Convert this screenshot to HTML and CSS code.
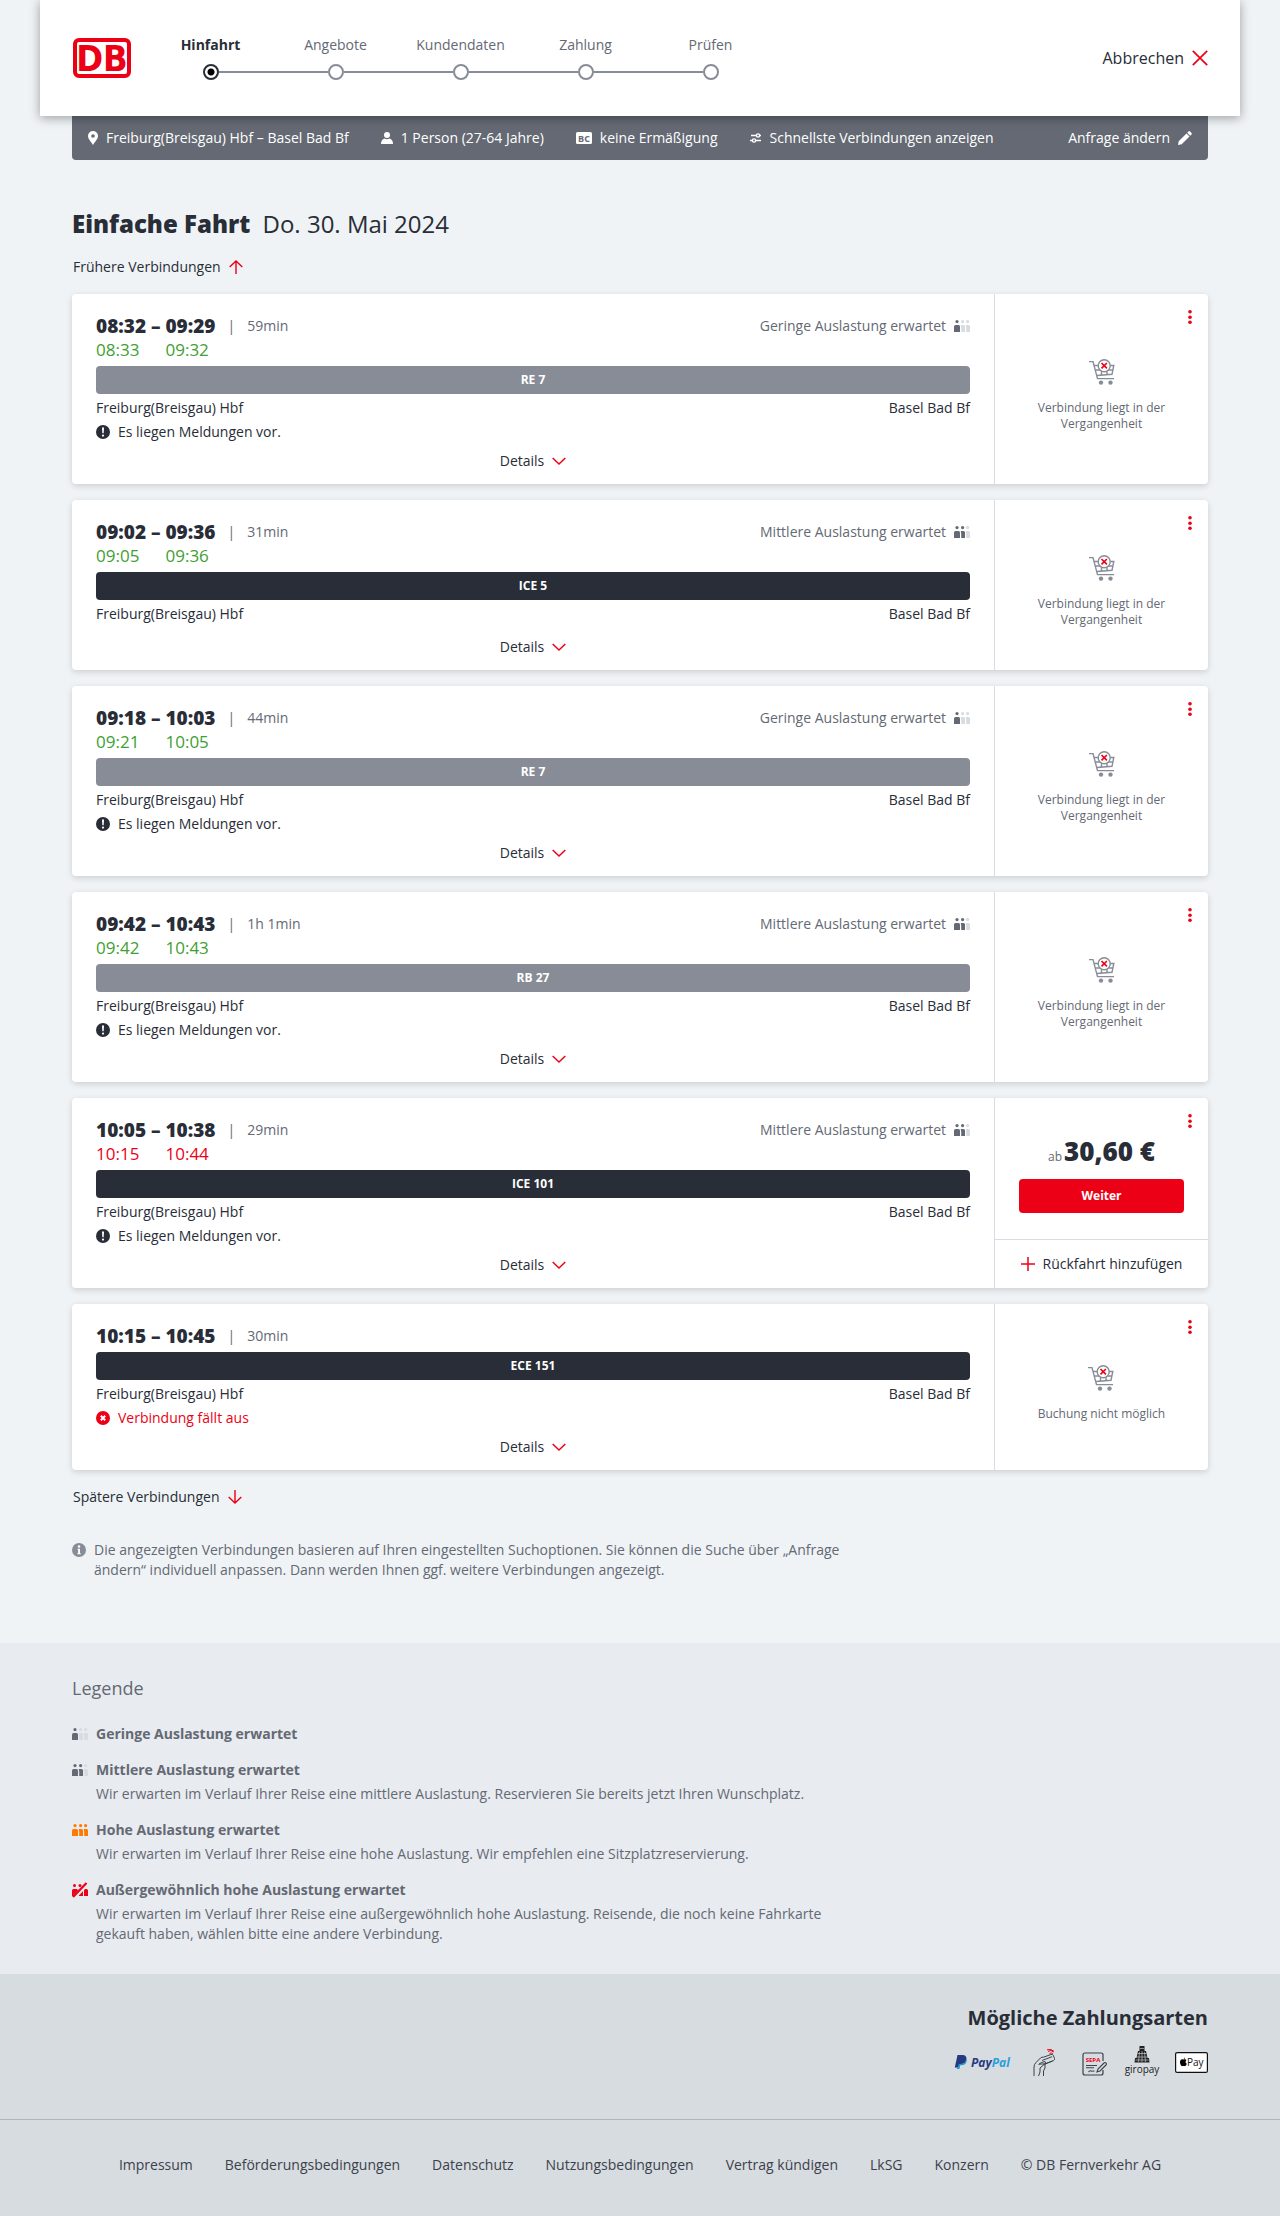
FILE: index.html
```html
<!DOCTYPE html>
<html lang="de">
<head>
    <meta charset="UTF-8">
    <meta name="viewport" content="width=device-width, initial-scale=1.0">
    <title>Einfache Fahrt – Angebote</title>
    <link rel="stylesheet" href="styles.css">
</head>
<body>
    <!-- Icons -->
    <svg class="icon-sprite" aria-hidden="true">
        <symbol id="i-leute" viewBox="0 0 16 12">
            <g class="p1"><circle cx="3" cy="1.600" r="1.600"/><path d="M0 12V6.500Q0 5 1.500 5h3Q6 5 6 6.500V12z"/></g>
            <g class="p2"><circle cx="8.600" cy="1.600" r="1.600"/><path d="M6.800 5h2.700Q11 5 11 6.500V12H7.200V8q0-1.500-.4-2z"/></g>
            <g class="p3"><circle cx="13.600" cy="1.600" r="1.600"/><path d="M11.800 5h2.700Q16 5 16 6.500V12h-3.800V8q0-1.500-.4-2z"/></g>
        </symbol>
        <symbol id="i-wagen" viewBox="0 0 26 26">
            <g fill="none" stroke="#878c96" stroke-width="1.400">
                <path d="M0 2.600h4l4.500 17H25M5.500 6.500h19.300L23 15.300 8 16.500M6.500 11H24M12.500 11v5.300M18 11v5"/>
                <circle cx="15.200" cy="6.700" r="6" fill="#fff"/>
            </g>
            <circle cx="12" cy="23.600" r="2.200" fill="#878c96"/>
            <circle cx="21.500" cy="23.600" r="2.200" fill="#878c96"/>
            <path d="M12.500 4l5.400 5.400M17.900 4l-5.400 5.400" stroke="#ec0016" stroke-width="1.600"/>
        </symbol>
        <symbol id="i-punkte" viewBox="0 0 4 14">
            <g fill="#ec0016"><circle cx="2" cy="1.800" r="1.800"/><circle cx="2" cy="7.200" r="1.800"/><circle cx="2" cy="12.200" r="1.800"/></g>
        </symbol>
        <symbol id="i-winkel" viewBox="0 0 14 14">
            <path d="M.7 4L7 10l6.300-6" fill="none" stroke="#ec0016" stroke-width="1.500"/>
        </symbol>
        <symbol id="i-hinweis" viewBox="0 0 14 14">
            <circle cx="7" cy="7" r="7" fill="#282d37"/>
            <path d="M6 2.500h2L7.700 8.300H6.300z" fill="#fff"/><circle cx="7" cy="10.600" r="1.100" fill="#fff"/>
        </symbol>
    </svg>

    <header class="kopf">
        <a class="logo" href="#" aria-label="Deutsche Bahn">
            <svg width="58" height="40" viewBox="0 0 58 40">
                <rect x="2" y="2" width="54" height="36" rx="4" fill="#fff" stroke="#ec0016" stroke-width="4"/>
                <text x="29" y="33" text-anchor="middle">DB</text>
            </svg>
        </a>
        <ol class="schritte">
            <li class="schritt aktiv">Hinfahrt<span class="marke"><i></i></span></li>
            <li class="schritt">Angebote<span class="marke"><i></i></span></li>
            <li class="schritt">Kundendaten<span class="marke"><i></i></span></li>
            <li class="schritt">Zahlung<span class="marke"><i></i></span></li>
            <li class="schritt">Prüfen<span class="marke"><i></i></span></li>
        </ol>
        <button class="abbrechen">Abbrechen
            <svg width="16" height="16" viewBox="0 0 16 16"><path d="M.8.800l14.400 14.400M15.200.800L.8 15.200" stroke="#ec0016" stroke-width="1.700"/></svg>
        </button>
    </header>

    <div class="anfrage">
        <span class="angabe">
            <svg width="10" height="14" viewBox="0 0 10 14"><path d="M5 0a5 5 0 0 1 5 5c0 3-3 5.500-5 9-2-3.500-5-6-5-9a5 5 0 0 1 5-5z" fill="#fff"/><circle cx="5" cy="5" r="1.800" fill="#646973"/></svg>
            Freiburg(Breisgau) Hbf – Basel Bad Bf
        </span>
        <span class="angabe">
            <svg width="12" height="12" viewBox="0 0 12 12"><circle cx="6" cy="3" r="3" fill="#fff"/><path d="M0 12q0-4.500 3.500-5.500Q6 8 8.500 6.500 12 7.500 12 12z" fill="#fff"/></svg>
            1 Person (27-64 Jahre)
        </span>
        <span class="angabe">
            <svg width="16" height="12" viewBox="0 0 16 12"><rect width="16" height="12" rx="1.500" fill="#fff"/><text x="8" y="9.500" text-anchor="middle" font-weight="700" font-size="9" fill="#646973">BC</text></svg>
            keine Ermäßigung
        </span>
        <span class="angabe">
            <svg width="12" height="10" viewBox="0 0 12 10"><g fill="none" stroke="#fff" stroke-width="1.400"><path d="M1 2.500h5M9.500 2.500H11M0 7.500h2M6 7.500h5"/><circle cx="8" cy="2.500" r="1.600"/><circle cx="4" cy="7.500" r="1.600"/></g></svg>
            Schnellste Verbindungen anzeigen
        </span>
        <button class="angabe aendern">Anfrage ändern
            <svg width="14" height="14" viewBox="0 0 14 14"><path d="M0 14l.7-3.700 7.800-7.800 3 3-7.800 7.800zM9.200 1.800l1.300-1.300q.8-.8 1.600 0l1.400 1.400q.8.800 0 1.600l-1.300 1.300z" fill="#fff"/></svg>
        </button>
    </div>

    <main class="inhalt">
        <h1 class="titel"><strong>Einfache Fahrt</strong> Do. 30. Mai 2024</h1>
        <button class="blaettern">Frühere Verbindungen
            <svg width="14" height="14" viewBox="0 0 14 14"><path d="M7 14V1M.7 7L7 .9 13.300 7" fill="none" stroke="#ec0016" stroke-width="1.400"/></svg>
        </button>

        <div class="liste">
            <article class="karte">
                <div class="reise">
                    <div class="kopfzeile">
                        <div class="zeiten"><b>08:32 –</b><b>09:29</b><span class="echt">08:33</span><span class="echt">09:32</span></div>
                        <span class="dauer">59min</span>
                        <span class="auslastung">Geringe Auslastung erwartet <svg class="leute gering"><use href="#i-leute"/></svg></span>
                    </div>
                    <div class="zug nah">RE 7</div>
                    <div class="info">
                        <div class="orte"><span>Freiburg(Breisgau) Hbf</span><span>Basel Bad Bf</span></div>
                        <p class="meldung"><svg><use href="#i-hinweis"/></svg>Es liegen Meldungen vor.</p>
                    </div>
                    <button class="details">Details <svg><use href="#i-winkel"/></svg></button>
                </div>
                <div class="seite">
                    <button class="menue" aria-label="Optionen"><svg><use href="#i-punkte"/></svg></button>
                    <div class="gesperrt"><svg><use href="#i-wagen"/></svg>Verbindung liegt in der Vergangenheit</div>
                </div>
            </article>

            <article class="karte">
                <div class="reise">
                    <div class="kopfzeile">
                        <div class="zeiten"><b>09:02 –</b><b>09:36</b><span class="echt">09:05</span><span class="echt">09:36</span></div>
                        <span class="dauer">31min</span>
                        <span class="auslastung">Mittlere Auslastung erwartet <svg class="leute mittel"><use href="#i-leute"/></svg></span>
                    </div>
                    <div class="zug">ICE 5</div>
                    <div class="info">
                        <div class="orte"><span>Freiburg(Breisgau) Hbf</span><span>Basel Bad Bf</span></div>
                    </div>
                    <button class="details">Details <svg><use href="#i-winkel"/></svg></button>
                </div>
                <div class="seite">
                    <button class="menue" aria-label="Optionen"><svg><use href="#i-punkte"/></svg></button>
                    <div class="gesperrt"><svg><use href="#i-wagen"/></svg>Verbindung liegt in der Vergangenheit</div>
                </div>
            </article>

            <article class="karte">
                <div class="reise">
                    <div class="kopfzeile">
                        <div class="zeiten"><b>09:18 –</b><b>10:03</b><span class="echt">09:21</span><span class="echt">10:05</span></div>
                        <span class="dauer">44min</span>
                        <span class="auslastung">Geringe Auslastung erwartet <svg class="leute gering"><use href="#i-leute"/></svg></span>
                    </div>
                    <div class="zug nah">RE 7</div>
                    <div class="info">
                        <div class="orte"><span>Freiburg(Breisgau) Hbf</span><span>Basel Bad Bf</span></div>
                        <p class="meldung"><svg><use href="#i-hinweis"/></svg>Es liegen Meldungen vor.</p>
                    </div>
                    <button class="details">Details <svg><use href="#i-winkel"/></svg></button>
                </div>
                <div class="seite">
                    <button class="menue" aria-label="Optionen"><svg><use href="#i-punkte"/></svg></button>
                    <div class="gesperrt"><svg><use href="#i-wagen"/></svg>Verbindung liegt in der Vergangenheit</div>
                </div>
            </article>

            <article class="karte">
                <div class="reise">
                    <div class="kopfzeile">
                        <div class="zeiten"><b>09:42 –</b><b>10:43</b><span class="echt">09:42</span><span class="echt">10:43</span></div>
                        <span class="dauer">1h 1min</span>
                        <span class="auslastung">Mittlere Auslastung erwartet <svg class="leute mittel"><use href="#i-leute"/></svg></span>
                    </div>
                    <div class="zug nah">RB 27</div>
                    <div class="info">
                        <div class="orte"><span>Freiburg(Breisgau) Hbf</span><span>Basel Bad Bf</span></div>
                        <p class="meldung"><svg><use href="#i-hinweis"/></svg>Es liegen Meldungen vor.</p>
                    </div>
                    <button class="details">Details <svg><use href="#i-winkel"/></svg></button>
                </div>
                <div class="seite">
                    <button class="menue" aria-label="Optionen"><svg><use href="#i-punkte"/></svg></button>
                    <div class="gesperrt"><svg><use href="#i-wagen"/></svg>Verbindung liegt in der Vergangenheit</div>
                </div>
            </article>

            <article class="karte">
                <div class="reise">
                    <div class="kopfzeile">
                        <div class="zeiten"><b>10:05 –</b><b>10:38</b><span class="echt spaet">10:15</span><span class="echt spaet">10:44</span></div>
                        <span class="dauer">29min</span>
                        <span class="auslastung">Mittlere Auslastung erwartet <svg class="leute mittel"><use href="#i-leute"/></svg></span>
                    </div>
                    <div class="zug">ICE 101</div>
                    <div class="info">
                        <div class="orte"><span>Freiburg(Breisgau) Hbf</span><span>Basel Bad Bf</span></div>
                        <p class="meldung"><svg><use href="#i-hinweis"/></svg>Es liegen Meldungen vor.</p>
                    </div>
                    <button class="details">Details <svg><use href="#i-winkel"/></svg></button>
                </div>
                <div class="seite">
                    <button class="menue" aria-label="Optionen"><svg><use href="#i-punkte"/></svg></button>
                    <div class="angebot">
                        <div class="preis"><small>ab</small><strong>30,60 €</strong></div>
                        <button class="weiter">Weiter</button>
                    </div>
                    <button class="rueckfahrt">
                        <svg width="14" height="14" viewBox="0 0 14 14"><path d="M7 0v14M0 7h14" stroke="#ec0016" stroke-width="1.500"/></svg>
                        Rückfahrt hinzufügen
                    </button>
                </div>
            </article>

            <article class="karte">
                <div class="reise">
                    <div class="kopfzeile">
                        <div class="zeiten"><b>10:15 –</b><b>10:45</b></div>
                        <span class="dauer">30min</span>
                    </div>
                    <div class="zug">ECE 151</div>
                    <div class="info">
                        <div class="orte"><span>Freiburg(Breisgau) Hbf</span><span>Basel Bad Bf</span></div>
                        <p class="meldung ausfall">
                            <svg viewBox="0 0 14 14"><circle cx="7" cy="7" r="7" fill="#ec0016"/><path d="M4.800 4.800l4.400 4.400M9.200 4.800L4.800 9.200" stroke="#fff" stroke-width="2"/></svg>
                            Verbindung fällt aus
                        </p>
                    </div>
                    <button class="details">Details <svg><use href="#i-winkel"/></svg></button>
                </div>
                <div class="seite">
                    <button class="menue" aria-label="Optionen"><svg><use href="#i-punkte"/></svg></button>
                    <div class="gesperrt"><svg><use href="#i-wagen"/></svg>Buchung nicht möglich</div>
                </div>
            </article>
        </div>

        <button class="blaettern">Spätere Verbindungen
            <svg width="14" height="14" viewBox="0 0 14 14"><path d="M7 0v13M.7 7L7 13.100 13.300 7" fill="none" stroke="#ec0016" stroke-width="1.400"/></svg>
        </button>

        <div class="suchhinweis">
            <svg width="14" height="14" viewBox="0 0 14 14"><circle cx="7" cy="7" r="7" fill="#878c96"/><circle cx="7" cy="3.500" r="1.200" fill="#fff"/><path d="M5.500 5.800H8v4.400h.8v1H5.300v-1h.8V6.800h-.6z" fill="#fff"/></svg>
            <p>Die angezeigten Verbindungen basieren auf Ihren eingestellten Suchoptionen. Sie können die Suche über „Anfrage ändern“ individuell anpassen. Dann werden Ihnen ggf. weitere Verbindungen angezeigt.</p>
        </div>
    </main>

    <section class="legende">
        <h2>Legende</h2>
        <dl>
            <div>
                <dt><svg class="leute gering"><use href="#i-leute"/></svg>Geringe Auslastung erwartet</dt>
            </div>
            <div>
                <dt><svg class="leute mittel"><use href="#i-leute"/></svg>Mittlere Auslastung erwartet</dt>
                <dd>Wir erwarten im Verlauf Ihrer Reise eine mittlere Auslastung. Reservieren Sie bereits jetzt Ihren Wunschplatz.</dd>
            </div>
            <div>
                <dt><svg class="leute hoch"><use href="#i-leute"/></svg>Hohe Auslastung erwartet</dt>
                <dd>Wir erwarten im Verlauf Ihrer Reise eine hohe Auslastung. Wir empfehlen eine Sitzplatzreservierung.</dd>
            </div>
            <div>
                <dt>
                    <svg class="leute" viewBox="0 0 16 12"><g fill="#ec0016"><circle cx="2.500" cy="1.600" r="1.500"/><circle cx="8" cy="1.600" r="1.500"/><path d="M0 12V6.500Q0 5 1.500 5h3Q6 5 6 6.500V12zM6.800 5h2.700Q11 5 11 6.500V12H6.800zM12 5h2.500Q16 5 16 6.500V12h-4z"/></g><path d="M3 12.500L15 0" stroke="#e8ebf0" stroke-width="4"/><path d="M1 13L14.500-1" stroke="#ec0016" stroke-width="2.200"/></svg>
                    Außergewöhnlich hohe Auslastung erwartet
                </dt>
                <dd>Wir erwarten im Verlauf Ihrer Reise eine außergewöhnlich hohe Auslastung. Reisende, die noch keine Fahrkarte gekauft haben, wählen bitte eine andere Verbindung.</dd>
            </div>
        </dl>
    </section>

    <footer class="fuss">
        <div class="zahlung">
            <h2>Mögliche Zahlungsarten</h2>
            <div class="zahlarten">
                <svg width="57" height="34" viewBox="0 0 57 34">
                    <path d="M3.500 10h5q4.500 0 3.800 4.500-.8 4.500-5.500 4.500H5l-.6 3.500H.8z" fill="#253b80"/>
                    <path d="M12.300 12.500q.9 1.200.4 3.500-.9 4.300-5.500 4.300h-1L5.500 24H2.800l.2-1.500h1.400L5 19h1.800q4.700 0 5.500-4.500z" fill="#179bd7"/>
                    <text x="17" y="22" font-weight="700" font-style="italic" font-size="12" fill="#253b80">Pay<tspan fill="#2a9fdc">Pal</tspan></text>
                </svg>
                <svg width="30" height="34" viewBox="0 0 30 34">
                    <g fill="none" stroke="#3c414b" stroke-width="1">
                        <path d="M7 31v-9q0-2.500 2-4.500l4.500-4.500q1.500-1.300 3-.8l7.500-2.700q1.800-.5 2.300.8l1.200 3.200q.4 1.500-1 2.100l-8.500 3.300-6 .2"/>
                        <path d="M13 23l4-3.500q3-1.300 1-3l-3.500 1-3 2M17 19.500l8.500-3.500M15 15.500l10-3.800M18 19v4l-1.500 3v5M13 23v4l-1.500 4"/>
                    </g>
                    <path d="M21 6.500q3-2.500 5.500.5M22.500 8.500q1.800-1.500 3.500.5M20 4.800q4-1.500 7 1.500" fill="none" stroke="#ec0016" stroke-width="1"/>
                </svg>
                <svg width="36" height="34" viewBox="0 0 36 34">
                    <path d="M30 16V10q0-2-2-2H12q-2 0-2 2v18q0 2 2 2h16q2 0 2-2v-3" fill="none" stroke="#3c414b" stroke-width="1.200"/>
                    <text x="20" y="17" text-anchor="middle" font-weight="700" font-size="6" fill="#ec0016">SEPA</text>
                    <path d="M13 20.500h11M13 22.700h8M15.500 27q2-2 3-.8l3-.2M24 27l1-3 6-6q1-1 2 0t0 2l-6 6z" fill="none" stroke="#3c414b" stroke-width="1.100"/>
                </svg>
                <svg width="34" height="34" viewBox="0 0 34 34">
                    <path d="M14.500 1h5v5h1.500l1.500 7H24l.5 4.500h-15L10 13h1.500L13 6h1.500z" fill="#222"/>
                    <path d="M12.500 8.500h9M11.500 12h11M10.500 15h13M17 6v11M14.500 7l-1 10M19.500 7l1 10M15 3.500h4" stroke="#d7dce0" stroke-width=".6"/>
                    <text x="17" y="28" text-anchor="middle" font-size="10" fill="#222">giropay</text>
                </svg>
                <svg width="33" height="34" viewBox="0 0 33 34">
                    <rect x=".6" y="7.600" width="31.800" height="19.800" rx="1.500" fill="#fff" stroke="#111" stroke-width="1.200"/>
                    <path d="M8.800 14q.1-1.300 1.300-1.600.1 1.300-1.300 1.600zM5 17.300c0-3 2-3.500 3.500-2.700 1.200-.7 2.500-.3 3 .5-1.400 1-1.200 3 .3 3.600-.6 1.800-1.600 2.900-2.600 2.400q-.8-.4-1.600 0C6.200 21.600 5 19.300 5 17.300z"/>
                    <text x="12" y="21" font-size="10" fill="#111">Pay</text>
                </svg>
            </div>
        </div>
        <nav class="links">
            <a href="#">Impressum</a>
            <a href="#">Beförderungsbedingungen</a>
            <a href="#">Datenschutz</a>
            <a href="#">Nutzungsbedingungen</a>
            <a href="#">Vertrag kündigen</a>
            <a href="#">LkSG</a>
            <a href="#">Konzern</a>
            <span>© DB Fernverkehr AG</span>
        </nav>
    </footer>
</body>
</html>
```
FILE: styles.css
```css
* {
    box-sizing: border-box;
}

body {
    margin: 0;
    background-color: #eff3f6;
    color: #282d37;
    font-family: "Open Sans", "Noto Sans", sans-serif;
    font-size: 14px;
    line-height: 20px;
}

h1, h2, p, ol, dl, dd {
    margin: 0;
    padding: 0;
}

button {
    border: none;
    padding: 0;
    background: none;
    color: inherit;
    font: inherit;
    cursor: pointer;
}

svg {
    flex-shrink: 0;
    overflow: visible;
}

.icon-sprite {
    display: none;
}

/* Kopfbereich */
.kopf {
    position: relative;
    z-index: 1;
    display: flex;
    align-items: center;
    height: 116px;
    margin: 0 40px;
    padding: 0 32px;
    background-color: #fff;
    box-shadow: 0 2px 10px rgba(0, 0, 0, 0.35);
}

.logo {
    display: flex;
    margin: 0 17px 0 1px;
}

.logo text {
    font-family: "Liberation Sans Narrow", "DejaVu Sans Condensed", sans-serif;
    font-size: 36px;
    font-weight: bold;
    fill: #ec0016;
}

.schritte {
    display: flex;
    list-style: none;
}

.schritt {
    width: 125px;
    text-align: center;
    line-height: 18px;
    color: #646973;
}

.marke {
    display: flex;
    align-items: center;
    margin-top: 10px;
}

.marke::before,
.marke::after {
    content: "";
    flex: 1;
    height: 2px;
    background-color: #878c96;
}

.marke i {
    width: 16px;
    height: 16px;
    border: 2px solid #878c96;
    border-radius: 50%;
}

.schritt:first-child .marke::before,
.schritt:last-child .marke::after {
    background-color: transparent;
}

.aktiv {
    font-weight: bold;
    color: #282d37;
}

.aktiv .marke i {
    border-color: #282d37;
    background: radial-gradient(circle, #000 3px, #fff 4px);
}

.abbrechen {
    display: flex;
    align-items: center;
    gap: 8px;
    margin-left: auto;
    font-size: 16px;
}

.anfrage {
    display: flex;
    align-items: center;
    gap: 32px;
    height: 44px;
    margin: 0 72px;
    padding: 0 16px;
    border-radius: 0 0 4px 4px;
    background-color: #646973;
    color: #fff;
}

.angabe {
    display: flex;
    align-items: center;
    gap: 8px;
    white-space: nowrap;
}

.aendern {
    margin-left: auto;
}

/* Verbindungen */
.inhalt {
    padding: 48px 72px 63px;
}

.titel {
    margin-bottom: 16px;
    font-size: 24px;
    line-height: 32px;
    font-weight: normal;
}

.titel strong {
    margin-right: 6px;
    font-weight: 800;
}

.blaettern {
    display: flex;
    align-items: center;
    gap: 8px;
    height: 22px;
    padding-left: 1px;
}

.liste {
    display: flex;
    flex-direction: column;
    gap: 16px;
    margin: 16px 0;
}

.karte {
    display: flex;
    border-radius: 4px;
    background-color: #fff;
    box-shadow: 0 2px 6px rgba(0, 0, 0, 0.15);
}

.reise {
    flex: 1;
    display: flex;
    flex-direction: column;
    padding: 20px 24px 11px;
}

.kopfzeile {
    display: flex;
    align-items: flex-start;
    line-height: 24px;
    color: #646973;
}

.zeiten {
    display: grid;
    grid-template-columns: auto auto;
    column-gap: 5px;
    color: #282d37;
}

.zeiten b {
    font-size: 19px;
    font-weight: 900;
}

.echt {
    font-size: 17px;
    color: #40a030;
}

.spaet {
    color: #ec0016;
}

.dauer::before {
    content: "|";
    margin: 0 12px;
}

.auslastung {
    display: flex;
    align-items: center;
    gap: 8px;
    margin-left: auto;
}

.leute {
    width: 16px;
    height: 12px;
    fill: #646973;
}

.gering {
    --zwei: #d7dce1;
    --drei: #d7dce1;
}

.mittel {
    --drei: #d7dce1;
}

.hoch {
    fill: #ff7a00;
}

.p2 {
    fill: var(--zwei, inherit);
}

.p3 {
    fill: var(--drei, inherit);
}

.zug {
    margin: 4px 0;
    border-radius: 4px;
    background-color: #282d37;
    color: #fff;
    font-size: 12px;
    font-weight: bold;
    line-height: 28px;
    text-align: center;
}

.nah {
    background-color: #878c96;
}

.info {
    min-height: 24px;
}

.orte {
    display: flex;
    justify-content: space-between;
}

.meldung {
    display: flex;
    align-items: center;
    gap: 8px;
    margin-top: 4px;
}

.meldung svg {
    width: 14px;
    height: 14px;
}

.ausfall {
    color: #ec0016;
}

.details {
    display: flex;
    align-items: center;
    gap: 8px;
    align-self: center;
    height: 24px;
    margin-top: 7px;
}

.details svg {
    width: 14px;
    height: 14px;
}

.seite {
    position: relative;
    display: flex;
    flex-direction: column;
    width: 214px;
    border-left: 1px solid #d7dce1;
}

.menue {
    position: absolute;
    top: 11px;
    right: 6px;
    display: flex;
    align-items: center;
    justify-content: center;
    width: 24px;
    height: 24px;
}

.menue svg {
    width: 4px;
    height: 14px;
}

.gesperrt {
    margin: auto;
    padding: 0 32px;
    color: #646973;
    font-size: 12px;
    line-height: 16px;
    text-align: center;
}

.gesperrt svg {
    display: block;
    width: 26px;
    height: 26px;
    margin: 13px auto 15px;
}

.angebot {
    flex: 1;
    padding: 37px 24px 0;
}

.preis {
    display: flex;
    align-items: baseline;
    justify-content: center;
    gap: 2px;
    margin-bottom: 12px;
    line-height: 32px;
}

.preis small {
    font-size: 12px;
    line-height: 16px;
    color: #646973;
}

.preis strong {
    font-size: 26px;
    font-weight: 900;
}

.weiter {
    width: 100%;
    height: 34px;
    border-radius: 4px;
    background-color: #ec0016;
    color: #fff;
    font-size: 12px;
    font-weight: bold;
}

.rueckfahrt {
    display: flex;
    align-items: center;
    justify-content: center;
    gap: 8px;
    height: 49px;
    border-top: 1px solid #d7dce1;
    white-space: nowrap;
}

.suchhinweis {
    display: flex;
    gap: 8px;
    max-width: 790px;
    margin-top: 32px;
    color: #646973;
}

.suchhinweis svg {
    margin-top: 3px;
}

/* Legende */
.legende {
    padding: 31px 72px 30px;
    background-color: #e8ebf0;
    color: #646973;
}

.legende h2 {
    margin-bottom: 22px;
    font-size: 18px;
    font-weight: normal;
    line-height: 28px;
}

.legende dl {
    display: flex;
    flex-direction: column;
    gap: 16px;
    max-width: 780px;
}

.legende dt {
    display: flex;
    align-items: center;
    gap: 8px;
    font-weight: bold;
}

.legende dd {
    margin: 4px 0 0 24px;
}

/* Fußbereich */
.fuss {
    background-color: #d7dce0;
}

.zahlung {
    display: flex;
    flex-direction: column;
    align-items: flex-end;
    padding: 30px 72px 40px;
    border-bottom: 1px solid #afb4bb;
}

.zahlung h2 {
    margin-bottom: 13px;
    font-size: 20px;
    font-weight: 700;
    line-height: 28px;
}

.zahlarten {
    display: flex;
    gap: 16px;
}

.links {
    display: flex;
    flex-wrap: wrap;
    justify-content: center;
    gap: 8px 32px;
    padding: 35px 72px 41px;
    color: #3c414b;
}

.links a {
    color: inherit;
    text-decoration: none;
}
```
